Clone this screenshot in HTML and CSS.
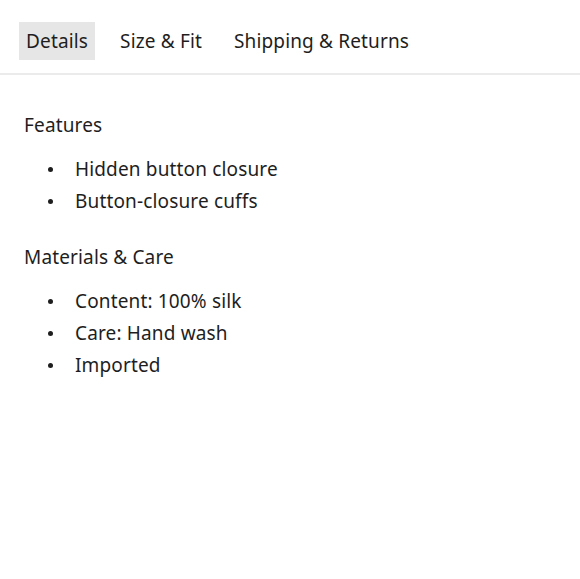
FILE: index.html
```html
<!DOCTYPE html>
<html>
<head>
<meta charset="utf-8">
<link rel="stylesheet" href="styles.css">
</head>
<body>
<div class="tabs">
  <div class="tab active">Details</div>
  <div class="tab">Size &amp; Fit</div>
  <div class="tab">Shipping &amp; Returns</div>
</div>
<div class="content">
  <h3 class="heading">Features</h3>
  <ul class="list">
    <li>Hidden button closure</li>
    <li>Button-closure cuffs</li>
  </ul>
  <h3 class="heading">Materials &amp; Care</h3>
  <ul class="list">
    <li>Content: 100% silk</li>
    <li>Care: Hand wash</li>
    <li>Imported</li>
  </ul>
</div>
</body>
</html>
```
FILE: styles.css
```css
html, body {
  margin: 0;
  padding: 0;
  background: #fff;
}
body {
  font-family: "Noto Sans", "DejaVu Sans", sans-serif;
  color: #1e1e1e;
  font-size: 19px;
  letter-spacing: 0.15px;
}
.tabs {
  display: flex;
  align-items: flex-start;
  gap: 18px;
  padding: 22px 0 0 19px;
  height: 51px;
  border-bottom: 2px solid #ebebeb;
}
.tab {
  height: 38px;
  line-height: 39px;
  padding: 0 7px;
}
.tab.active {
  background: #e6e6e6;
}
.content {
  padding: 34px 24px 0 24px;
}
.heading {
  margin: 0;
  font-weight: 400;
  font-size: 19px;
  line-height: 32px;
}
.list {
  list-style: none;
  margin: 12px 0 24px 0;
  padding: 0;
}
.list li {
  position: relative;
  padding-left: 51px;
  line-height: 32px;
}
.list li::before {
  content: "";
  position: absolute;
  left: 24px;
  top: 14px;
  width: 5px;
  height: 5px;
  border-radius: 50%;
  background: #1e1e1e;
}
```
